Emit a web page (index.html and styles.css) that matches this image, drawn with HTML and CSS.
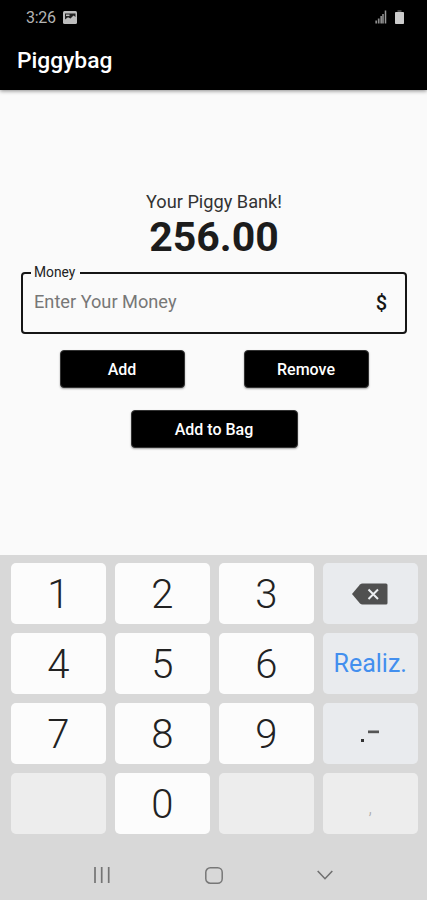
FILE: index.html
```
<!DOCTYPE html>
<html lang="en">
<head>
<meta charset="utf-8">
<title>Piggybag</title>
<link rel="stylesheet" href="styles.css">
</head>
<body>
<header class="top">
  <div class="status">
    <span class="clock">3:26</span>
    <svg class="photo" width="14" height="13" viewBox="0 0 14 13"><rect width="14" height="13" rx="1.5" fill="#bdbdbd"/><path d="M2 2.500H12.500V6L10.500 4.500L7.500 7.500L5 6.300L2 8.500Z" fill="#222"/><rect x="3" y="3.500" width="3.500" height="1.500" fill="#bdbdbd"/></svg>
    <svg class="signal" width="12" height="14" viewBox="0 0 12 14"><path d="M1.200 13.500V10.500M3.700 13.500V8.500M6.200 13.500V6" stroke="#8c8c8c" stroke-width="1.700"/><path d="M8 13.500V4M10.500 13.500V.5" stroke="#999" stroke-width="1.500"/></svg>
    <svg class="battery" width="9" height="14" viewBox="0 0 9 14"><path d="M2.500 0H6.500V2H2.500Z" fill="#444"/><rect y="2" width="9" height="12" rx=".8" fill="#ccc"/></svg>
  </div>
  <h1 class="title">Piggybag</h1>
</header>
<main class="content">
  <p class="caption">Your Piggy Bank!</p>
  <p class="amount">256.00</p>
  <fieldset class="field">
    <legend>Money</legend>
    <span class="hint">Enter Your Money</span>
    <span class="dollar">$</span>
  </fieldset>
  <div class="actions">
    <button class="btn">Add</button>
    <button class="btn">Remove</button>
  </div>
  <button class="btn wide">Add to Bag</button>
</main>
<section class="keyboard">
  <div class="keys">
    <div class="key">1</div><div class="key">2</div><div class="key">3</div>
    <div class="key fn"><svg width="36" height="22" viewBox="0 0 36 22"><path d="M0 11L8 1.500Q9 .5 10.500 .5H34Q35.500 .5 35.500 2V20Q35.500 21.500 34 21.500H10.500Q9 21.500 8 20.500Z" fill="#505050"/><path d="M16.500 6.500L26 16M26 6.500L16.500 16" stroke="#eceef1" stroke-width="2"/></svg></div>
    <div class="key">4</div><div class="key">5</div><div class="key">6</div>
    <div class="key fn done">Realiz.</div>
    <div class="key">7</div><div class="key">8</div><div class="key">9</div>
    <div class="key fn symbols"><svg width="20" height="14" viewBox="0 0 20 14"><rect x="1" y="10" width="3" height="3" fill="#333"/><rect x="8" y="1.500" width="11" height="2.700" fill="#555"/></svg></div>
    <div class="key off"></div><div class="key">0</div><div class="key off"></div>
    <div class="key off comma">,</div>
  </div>
  <nav class="nav">
    <svg width="16" height="16" viewBox="0 0 16 16"><path d="M1 0V16M7.700 0V16M14.700 0V16" stroke="#747474" stroke-width="1.700"/></svg>
    <svg width="18" height="17" viewBox="0 0 18 17"><rect x=".8" y=".8" width="16.400" height="15.400" rx="4.500" fill="none" stroke="#777" stroke-width="1.500"/></svg>
    <svg width="16" height="10" viewBox="0 0 16 10"><path d="M.7 1L8 8.700L15.300 1" fill="none" stroke="#707070" stroke-width="1.600"/></svg>
  </nav>
</section>
</body>
</html>
```
FILE: styles.css
```
* { box-sizing: border-box; }
body {
  margin: 0;
  width: 427px;
  height: 900px;
  display: flex;
  flex-direction: column;
  overflow: hidden;
  background: #fafafa;
  font-family: Roboto, "Liberation Sans", sans-serif;
  color: #1c1c1c;
}
.top {
  height: 90px;
  flex: none;
  background: #000;
  box-shadow: 0 1px 4px rgba(0, 0, 0, .45);
}
.status {
  height: 34px;
  padding: 0 23px 0 26px;
  display: flex;
  align-items: center;
}
.clock { font-size: 16px; line-height: 34px; padding-top: 1px; letter-spacing: -.3px; color: #b4b4b4; }
.photo { margin-left: 7px; }
.signal { margin-left: auto; margin-right: 8px; margin-top: -1px; }
.battery { margin-top: -1px; }
.title {
  margin: 0;
  padding-left: 17px;
  font-size: 22.8px;
  line-height: 54px;
  font-weight: 500;
  color: #fff;
}
.content {
  height: 465px;
  flex: none;
  padding: 101px 20px 0 21px;
  display: flex;
  flex-direction: column;
  align-items: center;
}
.caption { margin: 0; font-size: 18.2px; line-height: 22px; color: #333; }
.amount { margin: 0; font-size: 41px; line-height: 48px; font-weight: 700; }
.field {
  width: 386px;
  height: 70px;
  margin: 3px 0 0;
  padding: 7px 18px 13px 11px;
  border: 2px solid #151515;
  border-radius: 4px;
  display: flex;
  align-items: center;
  justify-content: space-between;
}
.field legend { margin-left: -3px; padding: 0 5px 0 3px; font-size: 13.8px; line-height: 17px; color: #222; }
.hint { font-size: 18.2px; line-height: 24px; color: #777; }
.dollar { padding-top: 3px; font-size: 20px; line-height: 24px; font-weight: 500; color: #151515; }
.actions { display: flex; gap: 59px; margin-top: 16px; }
.btn {
  width: 125px;
  height: 38px;
  padding: 0;
  border: 1px solid #333;
  border-radius: 4px;
  background: #000;
  box-shadow: 0 1px 2px rgba(0, 0, 0, .35);
  color: #fff;
  font: 500 16px Roboto, "Liberation Sans", sans-serif;
}
.wide { width: 167px; margin-top: 22px; }
.keyboard { flex: 1; padding: 8px 10px 0 11px; background: #d8d8d8; }
.keys { display: grid; grid-template-columns: repeat(4, 94.5px); grid-auto-rows: 61px; gap: 9px 9.500px; }
.key {
  display: flex;
  align-items: center;
  justify-content: center;
  padding-top: 2px;
  border-radius: 5px;
  background: #fcfcfc;
  font-size: 40px;
  font-weight: 300;
  color: #222;
}
.fn { padding-top: 0; background: #e9ebee; }
.off { background: #ededed; }
.done { font-size: 25px; font-weight: 400; color: #438fee; }
.symbols { padding-top: 5px; }
.comma { padding-top: 8px; font-size: 18px; color: #aaa; }
.nav { display: flex; align-items: center; justify-content: space-between; padding: 0 84px 0 83px; height: 82px; }
```
